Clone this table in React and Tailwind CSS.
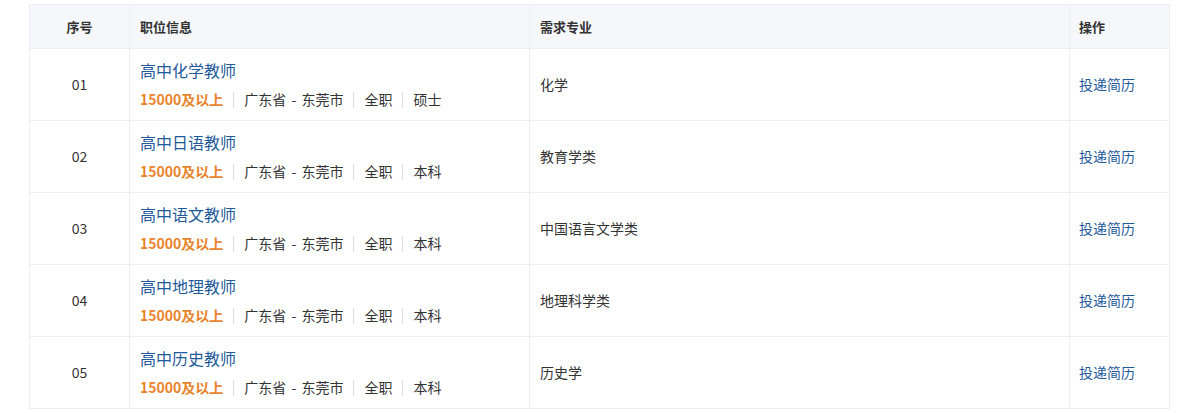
const jobs = [
    { no: '01', title: '高中化学教师', edu: '硕士', major: '化学' },
    { no: '02', title: '高中日语教师', edu: '本科', major: '教育学类' },
    { no: '03', title: '高中语文教师', edu: '本科', major: '中国语言文学类' },
    { no: '04', title: '高中地理教师', edu: '本科', major: '地理科学类' },
    { no: '05', title: '高中历史教师', edu: '本科', major: '历史学' },
];

function Sep() {
    return <span className="inline-block w-px h-[16px] bg-[#dcdcdc] mx-[10px] align-[-3px]" />;
}

export default function App() {
    return (
        <div className="bg-white min-h-screen pt-[4px] pl-[29px] font-['Microsoft_YaHei','Noto_Sans_CJK_SC',sans-serif] text-[#333]">
            <table className="border-collapse table-fixed w-[1140px]">
                <colgroup>
                    <col className="w-[100px]" />
                    <col className="w-[400px]" />
                    <col className="w-[540px]" />
                    <col className="w-[100px]" />
                </colgroup>
                <thead>
                    <tr className="bg-[#f5f7fa] h-[44px] text-[13px] font-bold text-[#333]">
                        <th className="border border-[#ebeef5] text-center font-bold">序号</th>
                        <th className="border border-[#ebeef5] text-left pl-[10px] font-bold">职位信息</th>
                        <th className="border border-[#ebeef5] text-left pl-[10px] font-bold">需求专业</th>
                        <th className="border border-[#ebeef5] text-left pl-[9px] font-bold">操作</th>
                    </tr>
                </thead>
                <tbody>
                    {jobs.map((job) => (
                        <tr key={job.no} className="h-[72px]">
                            <td className="border border-[#ebeef5] text-center text-[14px]">{job.no}</td>
                            <td className="border border-[#ebeef5] pl-[10px]">
                                <div className="text-[16px] leading-[20px] text-[#1f5a9a] -mt-[2px]">{job.title}</div>
                                <div className="mt-[10px] text-[14px] leading-[18px] whitespace-nowrap">
                                    <span className="font-bold text-[#e8842c]">15000及以上</span>
                                    <Sep />
                                    <span className="[word-spacing:2px]">广东省 - 东莞市</span>
                                    <Sep />
                                    <span>全职</span>
                                    <Sep />
                                    <span>{job.edu}</span>
                                </div>
                            </td>
                            <td className="border border-[#ebeef5] pl-[10px] text-[14px]">{job.major}</td>
                            <td className="border border-[#ebeef5] pl-[9px] text-[14px] text-[#1f5a9a]">投递简历</td>
                        </tr>
                    ))}
                </tbody>
            </table>
        </div>
    );
}
